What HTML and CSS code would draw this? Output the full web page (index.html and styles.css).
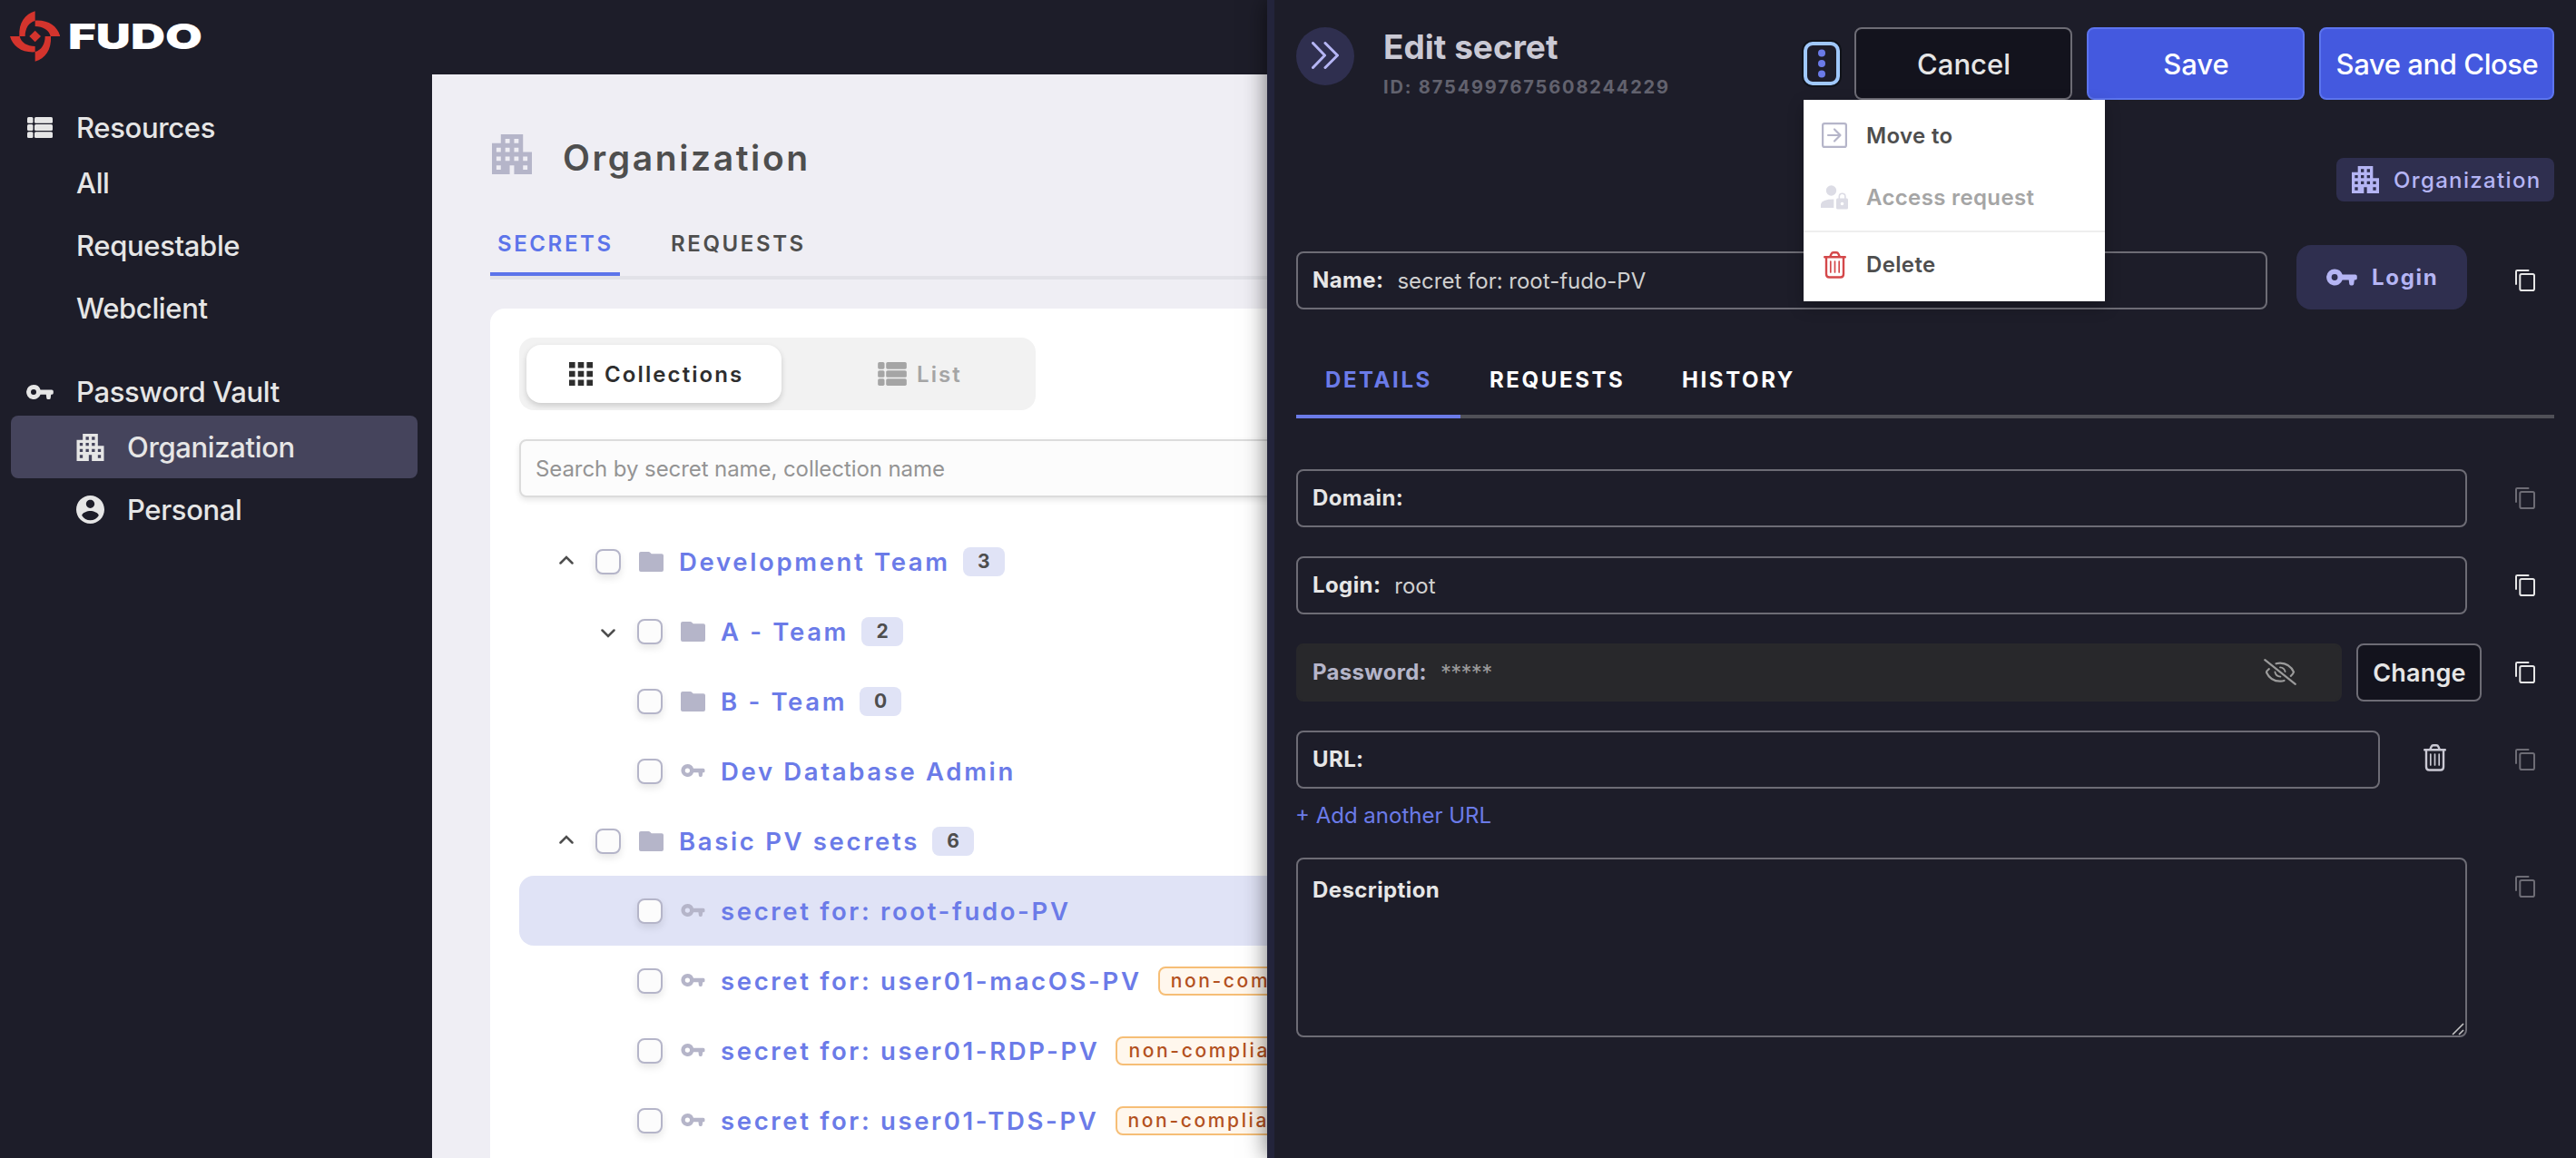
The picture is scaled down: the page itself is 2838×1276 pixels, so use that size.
FILE: index.html
```html
<!DOCTYPE html>
<html lang="en">
<head>
  <meta charset="UTF-8" />
  <meta name="viewport" content="width=device-width, initial-scale=1.0"/>
  <title>Fudo - Password Vault</title>
  <link rel="stylesheet" href="styles.css">
</head>
<body>
  <!-- icon set -->
  <svg class="sprite" width="0" height="0">
    <symbol id="i-list" viewBox="0 0 28 23">
      <rect width="6.5" height="6.8" rx="1.5"/><rect x="8" width="20" height="6.8" rx="1.5"/>
      <rect y="8.1" width="6.5" height="6.8" rx="1.5"/><rect x="8" y="8.1" width="20" height="6.8" rx="1.5"/>
      <rect y="16.2" width="6.5" height="6.8" rx="1.5"/><rect x="8" y="16.2" width="20" height="6.8" rx="1.5"/>
    </symbol>
    <symbol id="i-grid" viewBox="0 0 26 26">
      <path d="M0 0h6.6v6.6H0zM9.7 0h6.6v6.6H9.7zM19.4 0H26v6.6h-6.6zM0 9.7h6.6v6.6H0zM9.7 9.7h6.6v6.6H9.7zM19.4 9.7H26v6.6h-6.6zM0 19.4h6.6V26H0zM9.7 19.4h6.6V26H9.7zM19.4 19.4H26V26h-6.6z"/>
    </symbol>
    <symbol id="i-key" viewBox="0 0 30 16">
      <path fill-rule="evenodd" d="M8 0a8 8 0 0 1 7.6 5.4H28a1.8 1.8 0 0 1 1.8 1.8v1.9a1.6 1.6 0 0 1-1.6 1.6h-1l-.5 4a1.5 1.5 0 0 1-1.5 1.3h-1.4a1.5 1.5 0 0 1-1.5-1.3l-.5-4h-6.2A8 8 0 1 1 8 0zM8 5a3 3 0 1 0 0 6 3 3 0 0 0 0-6z"/>
    </symbol>
    <symbol id="i-building" viewBox="3 3 18 18">
      <path d="M17 11V3H7v4H3v14h8v-4h2v4h8V11h-4zM7 19H5v-2h2v2zm0-4H5v-2h2v2zm0-4H5V9h2v2zm4 4H9v-2h2v2zm0-4H9V9h2v2zm0-4H9V5h2v2zm4 8h-2v-2h2v2zm0-4h-2V9h2v2zm0-4h-2V5h2v2zm4 12h-2v-2h2v2zm0-4h-2v-2h2v2z"/>
    </symbol>
    <symbol id="i-user" viewBox="2 2 20 20">
      <path d="M12 2C6.48 2 2 6.48 2 12s4.48 10 10 10 10-4.480 10-10S17.520 2 12 2zm0 3c1.660 0 3 1.340 3 3s-1.340 3-3 3-3-1.340-3-3 1.340-3 3-3zm0 14.600c-2.500 0-4.710-1.280-6-3.420.03-1.990 4-3.280 6-3.280s5.970 1.290 6 3.280c-1.290 2.140-3.500 3.420-6 3.420z"/>
    </symbol>
    <symbol id="i-folder" viewBox="0 0 27 22">
      <path d="M2 0h8.500q1 0 1.700.8l1.500 1.400H25q2 0 2 2V20q0 2-2 2H2q-2 0-2-2V2q0-2 2-2z"/>
    </symbol>
    <symbol id="i-up" viewBox="0 0 16 10"><path d="M1.500 8.500 8 2l6.500 6.500" fill="none" stroke="currentColor" stroke-width="2.500" stroke-linecap="round"/></symbol>
    <symbol id="i-down" viewBox="0 0 16 10"><path d="M1.500 1.500 8 8l6.500-6.500" fill="none" stroke="currentColor" stroke-width="2.500" stroke-linecap="round"/></symbol>
    <symbol id="i-collapse" viewBox="0 0 30 30">
      <path d="M1.500 1.500 14.500 15 1.500 28.500M15 1.500 28.500 15 15 28.500" fill="none" stroke="currentColor" stroke-width="3" stroke-linecap="round" stroke-linejoin="round"/>
    </symbol>
    <symbol id="i-dots" viewBox="0 0 8 32"><circle cx="4" cy="4.500" r="4"/><circle cx="4" cy="16" r="4"/><circle cx="4" cy="27.500" r="4"/></symbol>
    <symbol id="i-move" viewBox="0 0 28 28">
      <g fill="none" stroke="currentColor" stroke-width="2.200" stroke-linecap="round" stroke-linejoin="round"><rect x="1.100" y="1.100" width="25.800" height="25.800" rx="2"/><path d="M7 14h13M14 7.500l6.500 6.500-6.500 6.500"/></g>
    </symbol>
    <symbol id="i-access" viewBox="0 0 30 27">
      <circle cx="11.500" cy="6" r="5.700"/>
      <path d="M0 25v-4q1-5.500 14.300-5.500V25z"/>
      <path d="M20.300 15v-2.500a3.300 3.300 0 0 1 6.600 0V15" fill="none" stroke="currentColor" stroke-width="1.600"/>
      <path fill-rule="evenodd" d="M18.500 14.500h10q1.500 0 1.500 1.500v9q0 1.500-1.500 1.500h-10q-1.500 0-1.500-1.500v-9q0-1.500 1.500-1.500zm5 4.200a1.800 1.800 0 1 0 0 3.600 1.800 1.800 0 0 0 0-3.600z"/>
    </symbol>
    <symbol id="i-trash" viewBox="0 0 25 30">
      <g fill="none" stroke="currentColor" stroke-linecap="round">
        <path stroke-width="2.400" d="M1.200 6.200h22.600M7.200 6l1.300-3q.8-1.700 2.300-1.700h3.400q1.500 0 2.300 1.700l1.300 3M3 6.200V25q0 3.500 3.300 3.500h12.400q3.300 0 3.300-3.500V6.200"/>
        <path stroke-width="1.700" d="M7.800 11v12M12.500 11v12M17.200 11v12"/>
      </g>
    </symbol>
    <symbol id="i-copy" viewBox="0 0 22 24">
      <g fill="none" stroke="currentColor" stroke-width="2"><rect x="5.300" y="5" width="15.700" height="18" rx="1.800"/><path stroke-linecap="round" d="M1 16V2.200Q1 1 2.200 1H14.500"/></g>
    </symbol>
    <symbol id="i-eye-off" viewBox="0 0 36 29">
      <g fill="none" stroke="currentColor" stroke-width="2.200" stroke-linecap="round">
        <path d="M1.300 1.200 34.800 27.800"/>
        <path d="M5.800 11.200Q3 13.300 3 15q4.500 9.700 15 9.700 2.600 0 4.500-.7M13.500 5.300Q16 4.600 18 4.600 28.500 4.800 33 14.500q-.7 2.400-3.200 4.300"/>
        <path stroke-width="1.800" d="M18 9.300q4.600.3 5.600 4.700M12.400 14.500q.8 4.700 6 5.200"/>
      </g>
    </symbol>
  </svg>

  <div class="app">
    <aside class="sidebar">
      <div class="logo">
        <svg width="55" height="56" viewBox="0 0 165 168">
          <g fill="#d4342d">
            <path id="blade" d="M83 1V33C62 38 50 58 50 84H31C28 40 50 10 83 1z"/>
            <use href="#blade" transform="rotate(90 83 84)"/>
            <use href="#blade" transform="rotate(180 83 84)"/>
            <use href="#blade" transform="rotate(270 83 84)"/>
            <path d="M83 65l19 19-19 19-19-19z"/>
          </g>
        </svg>
        <svg class="wordmark" width="160" height="50" viewBox="0 0 160 50">
          <text x="3" y="39" textLength="148" lengthAdjust="spacingAndGlyphs">FUDO</text>
        </svg>
      </div>

      <nav class="nav">
        <div class="nav-group">
          <a class="nav-head"><svg width="28" height="23"><use href="#i-list"/></svg>Resources</a>
          <a class="nav-item">All</a>
          <a class="nav-item">Requestable</a>
          <a class="nav-item">Webclient</a>
        </div>
        <div class="nav-group">
          <a class="nav-head"><svg width="30" height="16"><use href="#i-key"/></svg>Password Vault</a>
          <a class="nav-item active"><svg width="30" height="30"><use href="#i-building"/></svg>Organization</a>
          <a class="nav-item"><svg width="31" height="31"><use href="#i-user"/></svg>Personal</a>
        </div>
      </nav>
    </aside>

    <main class="main">
      <header class="page-head">
        <svg width="44" height="44"><use href="#i-building"/></svg>
        <h1>Organization</h1>
      </header>
      <div class="page-tabs">
        <a class="active">SECRETS</a>
        <a>REQUESTS</a>
      </div>

      <section class="card">
        <div class="toggle">
          <div class="toggle-item active"><svg width="26" height="26"><use href="#i-grid"/></svg>Collections</div>
          <div class="toggle-item"><svg width="32" height="26"><use href="#i-list"/></svg>List</div>
        </div>
        <input class="search" type="text" placeholder="Search by secret name, collection name">

        <div class="tree">
          <div class="row">
            <svg class="arrow" width="16" height="10"><use href="#i-up"/></svg><span class="check"></span>
            <svg class="icon" width="27" height="22"><use href="#i-folder"/></svg>Development Team<span class="count">3</span>
          </div>
          <div class="row child">
            <svg class="arrow down" width="16" height="10"><use href="#i-down"/></svg><span class="check"></span>
            <svg class="icon" width="27" height="22"><use href="#i-folder"/></svg>A - Team<span class="count">2</span>
          </div>
          <div class="row child">
            <span class="arrow"></span><span class="check"></span>
            <svg class="icon" width="27" height="22"><use href="#i-folder"/></svg>B - Team<span class="count">0</span>
          </div>
          <div class="row child">
            <span class="arrow"></span><span class="check"></span>
            <svg class="icon key" width="27" height="14"><use href="#i-key"/></svg>Dev Database Admin
          </div>
          <div class="row">
            <svg class="arrow" width="16" height="10"><use href="#i-up"/></svg><span class="check"></span>
            <svg class="icon" width="27" height="22"><use href="#i-folder"/></svg>Basic PV secrets<span class="count">6</span>
          </div>
          <div class="row child selected">
            <span class="arrow"></span><span class="check"></span>
            <svg class="icon key" width="27" height="14"><use href="#i-key"/></svg>secret for: root-fudo-PV
          </div>
          <div class="row child">
            <span class="arrow"></span><span class="check"></span>
            <svg class="icon key" width="27" height="14"><use href="#i-key"/></svg>secret for: user01-macOS-PV<span class="warn">non-compliant</span>
          </div>
          <div class="row child">
            <span class="arrow"></span><span class="check"></span>
            <svg class="icon key" width="27" height="14"><use href="#i-key"/></svg>secret for: user01-RDP-PV<span class="warn">non-compliant</span>
          </div>
          <div class="row child">
            <span class="arrow"></span><span class="check"></span>
            <svg class="icon key" width="27" height="14"><use href="#i-key"/></svg>secret for: user01-TDS-PV<span class="warn">non-compliant</span>
          </div>
        </div>
      </section>
    </main>

    <!-- edit drawer -->
    <div class="drawer">
      <header class="drawer-head">
        <div class="collapse"><svg width="30" height="30"><use href="#i-collapse"/></svg></div>
        <div class="drawer-title">
          <h2>Edit secret</h2>
          <p>ID: 8754997675608244229</p>
        </div>
        <div class="actions">
          <div class="kebab">
            <svg width="8" height="32"><use href="#i-dots"/></svg>
            <div class="menu">
              <a><svg width="28" height="28"><use href="#i-move"/></svg>Move to</a>
              <a class="disabled"><svg width="30" height="27"><use href="#i-access"/></svg>Access request</a>
              <a class="delete"><svg width="25" height="30"><use href="#i-trash"/></svg>Delete</a>
            </div>
          </div>
          <div class="btn">Cancel</div>
          <div class="btn primary">Save</div>
          <div class="btn primary wide">Save and Close</div>
        </div>
      </header>

      <div class="chip"><svg width="30" height="30"><use href="#i-building"/></svg>Organization</div>

      <div class="line name-line">
        <div class="field"><b>Name:</b><span>secret for: root-fudo-PV</span></div>
        <div class="login-btn"><svg width="34" height="19"><use href="#i-key"/></svg>Login</div>
        <svg class="copy" width="22" height="24"><use href="#i-copy"/></svg>
      </div>

      <div class="drawer-tabs">
        <a class="active">DETAILS</a>
        <a>REQUESTS</a>
        <a>HISTORY</a>
      </div>

      <div class="form">
        <div class="line">
          <div class="field"><b>Domain:</b></div>
          <svg class="copy off" width="22" height="24"><use href="#i-copy"/></svg>
        </div>
        <div class="line">
          <div class="field"><b>Login:</b><span>root</span></div>
          <svg class="copy" width="22" height="24"><use href="#i-copy"/></svg>
        </div>
        <div class="line">
          <div class="field password"><b>Password:</b><span>*****</span><svg width="36" height="29"><use href="#i-eye-off"/></svg></div>
          <div class="change">Change</div>
          <svg class="copy" width="22" height="24"><use href="#i-copy"/></svg>
        </div>
        <div class="line">
          <div class="field url"><b>URL:</b></div>
          <svg class="trash" width="25" height="30"><use href="#i-trash"/></svg>
          <svg class="copy off" width="22" height="24"><use href="#i-copy"/></svg>
        </div>
      </div>
      <a class="add-url">+ Add another URL</a>
      <div class="line top">
        <div class="field area">
          <b>Description</b>
          <svg class="grip" width="14" height="14" viewBox="0 0 14 14"><path d="M1 13 13 1M8 13l5-5" fill="none" stroke="#c4c4c4" stroke-width="1.600"/></svg>
        </div>
        <svg class="copy off" width="22" height="24"><use href="#i-copy"/></svg>
      </div>
    </div>
  </div>
</body>
</html>
```
FILE: styles.css
```css
* {
  box-sizing: border-box;
}
body {
  margin: 0;
  font-family: Inter, "Liberation Sans", sans-serif;
  background: #1d1d29;
}
h1, h2, p {
  margin: 0;
}
svg {
  fill: currentColor;
  flex-shrink: 0;
}
.sprite {
  position: absolute;
}
.app {
  position: relative;
  display: flex;
  height: 1276px;
  overflow: hidden;
}

/* sidebar */
.sidebar {
  width: 476px;
  flex-shrink: 0;
  padding: 12px 16px 0 12px;
  color: #e6e6e6;
}
.logo {
  display: flex;
  align-items: center;
  gap: 6px;
  height: 56px;
  margin-left: -1px;
}
.wordmark text {
  font-size: 38.5px;
  font-weight: 900;
  fill: #fff;
}
.nav {
  display: flex;
  flex-direction: column;
  gap: 31px;
  margin-top: 46px;
  font-size: 31px;
  font-weight: 450;
  letter-spacing: -0.35px;
}
.nav-head {
  display: flex;
  align-items: center;
  height: 53px;
  padding-left: 17px;
}
.nav-head svg {
  width: 30px;
  margin-right: 25px;
}
.nav-item {
  display: flex;
  align-items: center;
  height: 69px;
  width: 448px;
  padding-left: 72px;
  border-radius: 8px;
}
.nav-item svg {
  width: 31px;
  margin-right: 25px;
}
.nav-item.active {
  background: #45445c;
}

/* main page */
.main {
  flex: 1;
  margin-top: 82px;
  padding: 66px 64px 0;
  background: #efeef4;
}
.page-head {
  display: flex;
  height: 44px;
  padding-left: 2px;
  color: #b5b5c9;
}
.page-head h1 {
  margin: 3px 0 0 34px;
  font-size: 39px;
  line-height: 46px;
  font-weight: 600;
  letter-spacing: 2.6px;
  color: #4e4e4e;
}
.page-tabs {
  display: flex;
  gap: 50px;
  margin-top: 45px;
  border-bottom: 4px solid #e2e2e8;
  font-size: 24px;
  font-weight: 600;
  letter-spacing: 2.6px;
  color: #4e4e4e;
}
.page-tabs a {
  height: 67px;
  line-height: 63px;
  padding-left: 6px;
  border-bottom: 4px solid transparent;
}
.page-tabs .active {
  width: 143px;
  padding-left: 8px;
  color: #5c74ea;
  border-color: #5c74ea;
}
.card {
  height: 1000px;
  margin-top: 32px;
  padding: 32px;
  border-radius: 16px;
  background: #fff;
}
.toggle {
  display: flex;
  width: 569px;
  height: 80px;
  padding: 8px;
  border-radius: 16px;
  background: #f2f2f2;
}
.toggle-item {
  display: flex;
  align-items: center;
  gap: 11px;
  padding-left: 106px;
  font-size: 24px;
  font-weight: 600;
  letter-spacing: 2.1px;
  color: #a5a5a5;
}
.toggle-item.active {
  width: 281px;
  padding-left: 47px;
  gap: 13px;
  border-radius: 16px;
  background: #fff;
  color: #2e2e2e;
  box-shadow: 0 3px 6px rgba(0, 0, 0, 0.16);
}
.search {
  display: block;
  width: 100%;
  height: 64px;
  margin-top: 32px;
  padding: 0 16px;
  border: 2px solid #dcdcdc;
  border-radius: 8px;
  background: #fcfcfc;
  box-shadow: 0 3px 6px rgba(0, 0, 0, 0.1);
  font: 400 24px Inter, sans-serif;
  letter-spacing: -0.08px;
}
.search::placeholder {
  color: #949494;
}
.tree {
  margin-top: 32px;
}
.row {
  display: flex;
  align-items: center;
  height: 77px;
  padding-left: 44px;
  border-radius: 16px;
  font-size: 27.5px;
  font-weight: 600;
  letter-spacing: 2.66px;
  white-space: nowrap;
  color: #6b7be8;
}
.row.child {
  padding-left: 90px;
}
.row.selected {
  background: #e0e3f6;
}
.arrow {
  width: 16px;
  margin-right: 24px;
  margin-bottom: 3px;
  color: #4e4e4e;
}
.arrow.down {
  margin: 4px 24px 0 0;
}
.check {
  width: 28px;
  height: 28px;
  border: 2px solid #b5b5c9;
  border-radius: 8px;
  background: #fcfcfc;
  box-shadow: 0 4px 8px rgba(0, 0, 0, 0.1);
}
.icon {
  margin: 0 17px 0 20px;
  color: #b5b5c9;
}
.icon.key {
  margin-bottom: 2px;
}
.count {
  width: 46px;
  height: 32px;
  margin-left: 14px;
  border-radius: 8px;
  background: #e0e3f6;
  font-size: 21px;
  font-weight: 700;
  line-height: 32px;
  letter-spacing: 0;
  text-align: center;
  color: #4e4e4e;
}
.warn {
  height: 32px;
  margin-left: 18px;
  padding: 0 12px;
  border: 2px solid #f6be76;
  border-radius: 8px;
  background: #fff7ed;
  font-size: 21px;
  font-weight: 500;
  line-height: 27px;
  letter-spacing: 2.63px;
  color: #b3511f;
}

/* drawer */
.drawer {
  position: absolute;
  top: 0;
  right: 0;
  width: 1442px;
  height: 1276px;
  padding: 30px 24px 0;
  border-left: 8px solid #23243b;
  background: #1d1d29;
  box-shadow: 0 0 24px rgba(0, 0, 0, 0.55);
}
.drawer-head {
  display: flex;
  height: 80px;
}
.collapse {
  display: flex;
  align-items: center;
  justify-content: center;
  width: 64px;
  height: 64px;
  padding-bottom: 3px;
  border-radius: 50%;
  background: #2f2f4f;
  color: #b5b5f4;
}
.drawer-title {
  margin-left: 32px;
}
.drawer-title h2 {
  font-size: 37px;
  line-height: 43px;
  font-weight: 700;
  color: #cac9d4;
}
.drawer-title p {
  margin-top: 11px;
  font-size: 20px;
  line-height: 25px;
  font-weight: 700;
  letter-spacing: 1.85px;
  color: #62626e;
}
.actions {
  display: flex;
  align-items: center;
  gap: 16px;
  margin-left: auto;
}
.kebab {
  position: relative;
  display: flex;
  align-items: center;
  justify-content: center;
  width: 40px;
  height: 48px;
  border: 4px solid #a0c8fb;
  border-radius: 10px;
  box-shadow: 0 0 0 2px #10131a;
  color: #6b7be8;
}
.btn {
  width: 240px;
  height: 80px;
  padding-left: 1px;
  border: 2px solid #6d6c75;
  border-radius: 8px;
  background: #13131d;
  color: #e6e6e6;
  font-size: 31px;
  font-weight: 500;
  line-height: 77px;
  text-align: center;
}
.btn.primary {
  border-color: #5c74ee;
  background: #4459df;
  color: #fff;
}
.btn.wide {
  width: 259px;
  letter-spacing: -0.42px;
}
.menu {
  position: absolute;
  z-index: 2;
  top: 60px;
  left: -4px;
  width: 332px;
  height: 222px;
  padding-top: 5px;
  background: #fff;
  box-shadow: 0 6px 16px rgba(0, 0, 0, 0.25);
}
.menu a {
  display: flex;
  align-items: center;
  height: 68px;
  padding-left: 20px;
  font-size: 24px;
  font-weight: 600;
  letter-spacing: 0.35px;
  color: #4e4e4e;
}
.menu svg {
  margin-right: 21px;
  color: #b5b5c9;
}
.menu .disabled {
  padding-left: 19px;
  color: #a5a5a5;
}
.menu .disabled svg {
  margin-right: 20px;
  color: #dcdce5;
}
.menu .delete {
  height: 73px;
  margin-top: 3px;
  padding-left: 22px;
  border-top: 2px solid #eeeeee;
}
.menu .delete svg {
  margin-right: 22px;
  color: #d4484a;
}
.chip {
  display: flex;
  align-items: center;
  width: 240px;
  height: 48px;
  margin: 64px 0 48px auto;
  padding-left: 17px;
  gap: 16px;
  border-radius: 8px;
  background: #2f2f4f;
  font-size: 24px;
  font-weight: 500;
  letter-spacing: 1.35px;
  color: #b5b5f4;
}
.line {
  display: flex;
  align-items: center;
}
.field {
  display: flex;
  align-items: center;
  width: 1290px;
  height: 64px;
  padding: 0 16px 2px;
  border: 2px solid #6d6c75;
  border-radius: 8px;
  font-size: 24px;
  color: #d0d0d0;
}
.field b {
  letter-spacing: 0.4px;
  color: #e6e6e6;
}
.field span {
  margin: 2px 0 0 15px;
}
.copy {
  margin: 0 21px 0 auto;
  color: #e6e6e6;
}
.copy.off {
  color: #6d6c75;
}
.name-line {
  align-items: flex-end;
}
.name-line .field {
  width: 1070px;
}
.name-line .copy {
  margin-bottom: 20px;
}
.login-btn {
  display: flex;
  align-items: center;
  gap: 16px;
  width: 188px;
  height: 71px;
  margin-left: 32px;
  padding-left: 33px;
  border-radius: 16px;
  background: #2f2f4f;
  font-size: 24px;
  font-weight: 700;
  letter-spacing: 1.7px;
  color: #b5b5f4;
}
.drawer-tabs {
  display: flex;
  height: 81px;
  margin-top: 39px;
  border-bottom: 4px solid #505057;
  font-size: 24px;
  font-weight: 700;
  line-height: 78px;
  letter-spacing: 2.6px;
  color: #fff;
}
.drawer-tabs a {
  width: 212px;
  height: 81px;
  padding-left: 32px;
}
.drawer-tabs .active {
  width: 181px;
  border-bottom: 4px solid #6b7be8;
  color: #6b7be8;
}
.form {
  display: flex;
  flex-direction: column;
  gap: 32px;
  margin-top: 56px;
}
.field.password {
  width: 1152px;
  border-color: #28282b;
  background: #28282b;
  color: #9b9b9b;
}
.password b {
  letter-spacing: 0.3px;
  color: #b5b5c9;
}
.password span {
  letter-spacing: -0.7px;
}
.password svg {
  margin-left: auto;
  margin-right: 32px;
}
.change {
  width: 138px;
  height: 64px;
  margin-left: 16px;
  padding-left: 1px;
  border: 2px solid #6d6c75;
  border-radius: 8px;
  background: #13131d;
  font-size: 27px;
  font-weight: 600;
  line-height: 61px;
  letter-spacing: 0.2px;
  text-align: center;
  color: #e6e6e6;
}
.field.url {
  width: 1194px;
}
.trash {
  margin: 0 0 4px 48px;
  color: #cac9d4;
}
.add-url {
  display: block;
  margin: 15px 0 31px -1px;
  font-size: 24px;
  line-height: 30px;
  color: #6b7be8;
}
.line.top {
  align-items: flex-start;
}
.line.top .copy {
  margin-top: 20px;
}
.field.area {
  position: relative;
  align-items: flex-start;
  height: 198px;
  padding-top: 19px;
  line-height: 30px;
}
.grip {
  position: absolute;
  right: 1px;
  bottom: 0;
}
```
